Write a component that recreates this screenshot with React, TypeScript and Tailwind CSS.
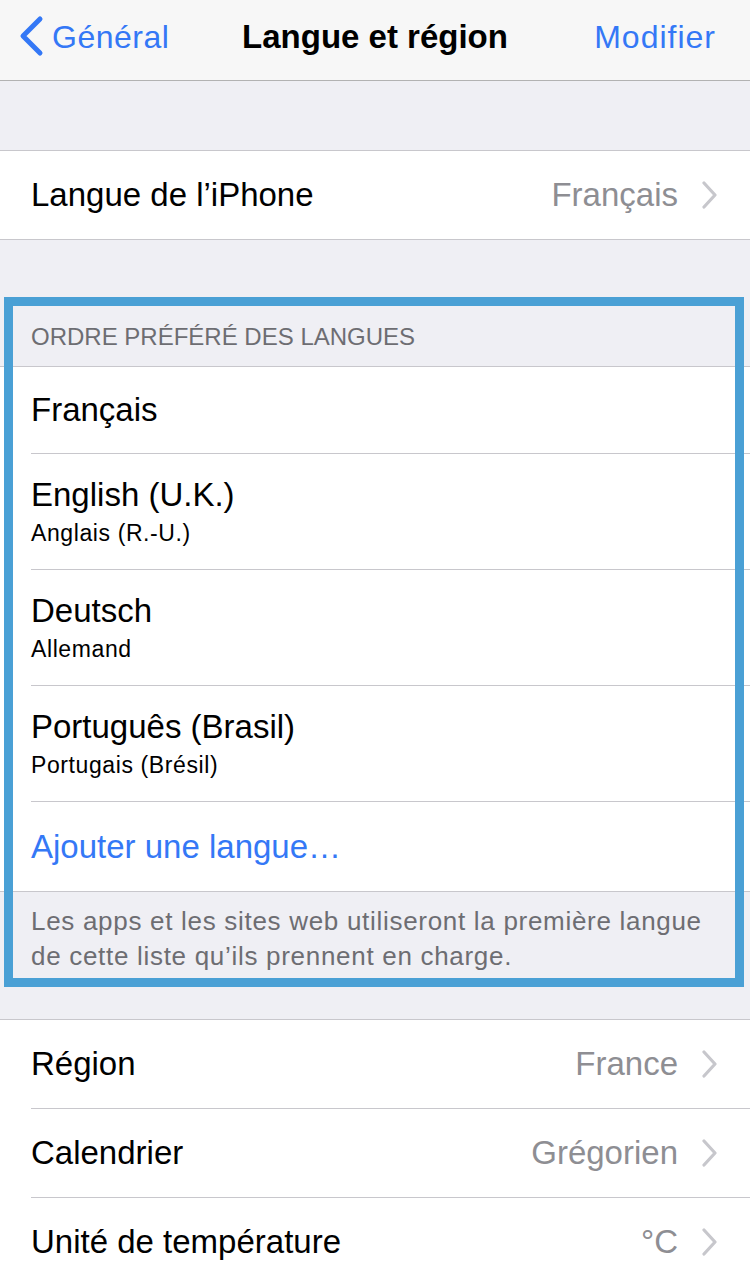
import React from 'react';

const font = { fontFamily: '"Liberation Sans", Arial, sans-serif' };

const Chevron = () => (
  <svg width="16" height="28" viewBox="0 0 16 28" className="ml-[24px] shrink-0">
    <path d="M2 2 L13 14 L2 26" fill="none" stroke="#c7c7cc" strokeWidth="3.2" strokeLinecap="round" strokeLinejoin="round" />
  </svg>
);

const ValueRow = ({ label, value, last }: { label: string; value: string; last?: boolean }) => (
  <div className="pl-[31px]">
    <div className={`flex items-center pr-[32px] ${last ? 'h-[88px]' : 'h-[89px] border-b border-[#c8c7cc]'}`}>
      <span className="text-[33px] text-black flex-1">{label}</span>
      <span className="text-[33px] text-[#8e8e93]">{value}</span>
      <Chevron />
    </div>
  </div>
);

const LangRow = ({ title, sub }: { title: string; sub?: string }) => (
  <div className="pl-[31px]">
    <div className={`flex flex-col justify-center border-b border-[#c8c7cc] ${sub ? 'h-[116px]' : 'h-[87px]'}`}>
      <span className="text-[33px] text-black leading-[40px]">{title}</span>
      {sub && <span className="text-[23px] tracking-[0.6px] text-black leading-[30px] mt-[3px]">{sub}</span>}
    </div>
  </div>
);

export default function App() {
  return (
    <div className="relative w-[750px] h-[1286px] overflow-hidden bg-[#efeff4]" style={font}>
      {/* nav bar */}
      <div className="h-[81px] bg-[#f7f7f7] border-b border-[#b2b2b2] flex items-center px-[18px] pb-[6px]">
        <div className="flex items-center w-[220px]">
          <svg width="26" height="44" viewBox="0 0 26 44">
            <path d="M22 4 L5 21 L22 38" fill="none" stroke="#3478f6" strokeWidth="5" strokeLinecap="round" strokeLinejoin="round" />
          </svg>
          <span className="text-[32px] tracking-[0.5px] text-[#3478f6] ml-[8px]">Général</span>
        </div>
        <div className="flex-1 text-center text-[33px] font-bold text-black">Langue et région</div>
        <div className="w-[220px] text-right text-[32px] tracking-[1px] text-[#3478f6] pr-[16px]">Modifier</div>
      </div>

      <div className="h-[69px]" />

      <div className="bg-white border-y border-[#c8c7cc]">
        <ValueRow label="Langue de l’iPhone" value="Français" last />
      </div>

      {/* preferred order section */}
      <div className="h-[126px] flex items-end pl-[31px] pb-[11px]">
        <span className="text-[24px] text-[#6d6d72]">ORDRE PRÉFÉRÉ DES LANGUES</span>
      </div>
      <div className="bg-white border-y border-[#c8c7cc]">
        <LangRow title="Français" />
        <LangRow title="English (U.K.)" sub="Anglais (R.-U.)" />
        <LangRow title="Deutsch" sub="Allemand" />
        <LangRow title="Português (Brasil)" sub="Portugais (Brésil)" />
        <div className="pl-[31px] h-[89px] flex items-center">
          <span className="text-[33px] text-[#3478f6]">Ajouter une langue…</span>
        </div>
      </div>
      <div className="pl-[31px] pr-[40px] pt-[12px] h-[127px] text-[26px] tracking-[0.7px] leading-[35px] text-[#6d6d72]">
        Les apps et les sites web utiliseront la première langue de cette liste qu’ils prennent en charge.
      </div>

      <div className="bg-white border-t border-[#c8c7cc]">
        <ValueRow label="Région" value="France" />
        <ValueRow label="Calendrier" value="Grégorien" />
        <ValueRow label="Unité de température" value="°C" last />
      </div>

      {/* highlight frame */}
      <div className="absolute left-[4px] top-[297px] w-[740px] h-[690px] border-[9px] border-[#4aa0d5] pointer-events-none" />
    </div>
  );
}
